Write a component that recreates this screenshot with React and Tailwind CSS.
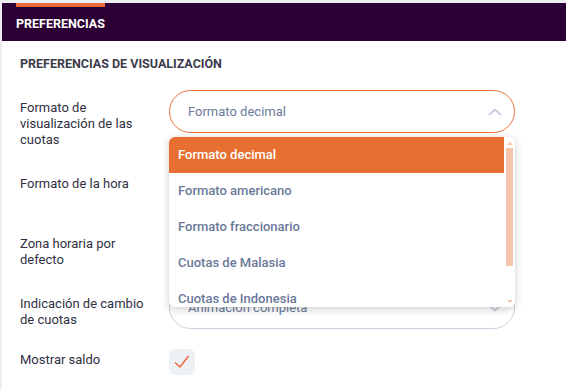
import React from 'react';

const options = [
    'Formato decimal',
    'Formato americano',
    'Formato fraccionario',
    'Cuotas de Malasia',
    'Cuotas de Indonesia',
    'Cuotas de Hong Kong',
];

function Chevron({ up }) {
    return (
        <svg width="14" height="8" viewBox="0 0 14 8" className="shrink-0">
            <polyline
                points={up ? '1,7 7,1.5 13,7' : '1,1 7,6.5 13,1'}
                fill="none"
                stroke="#c7cfdf"
                strokeWidth="2"
            />
        </svg>
    );
}

function Select({ value, active, up, children }) {
    return (
        <div className="relative w-[346px]">
            <div
                className={
                    'h-[43px] rounded-full border bg-white flex items-center justify-between pl-[18px] pr-[12px] ' +
                    (active ? 'border-[#e8733a]' : 'border-[#c9d0e0]')
                }
            >
                <span className="text-[13px] text-[#6c7b9b]">{value}</span>
                <Chevron up={up} />
            </div>
            {children}
        </div>
    );
}

function Dropdown() {
    return (
        <div className="absolute left-0 top-[47px] z-10 w-[346px] h-[170px] bg-white rounded-[6px] overflow-hidden shadow-[0_2px_8px_rgba(0,0,0,0.2)] flex">
            <div className="flex-1 flex flex-col overflow-hidden">
                {options.map((o, i) => (
                    <div
                        key={o}
                        className={
                            'h-[36px] shrink-0 flex items-center px-[9px] text-[13px] font-medium ' +
                            (i === 0 ? 'bg-[#e86f32] text-white' : 'text-[#6a7999]')
                        }
                    >
                        {o}
                    </div>
                ))}
            </div>
            <div className="w-[7px] mx-[2px] flex flex-col items-center pt-[5px] pb-[4px]">
                <div className="w-0 h-0 border-l-[3px] border-r-[3px] border-b-[3px] border-l-transparent border-r-transparent border-b-[#f5c4ab]" />
                <div className="w-[7px] h-[118px] mt-[3px] bg-[#f5c4ab]" />
                <div className="flex-1" />
                <div className="w-0 h-0 border-l-[3px] border-r-[3px] border-t-[3px] border-l-transparent border-r-transparent border-t-[#f5c4ab]" />
            </div>
        </div>
    );
}

function Row({ label, className, children }) {
    return (
        <div className={'flex items-start ' + className}>
            <div className="w-[149px] pt-[10px] pr-[20px] text-[13px] leading-[16px] text-[#30303f]">
                {label}
            </div>
            {children}
        </div>
    );
}

export default function App() {
    return (
        <div
            className="min-h-screen bg-[#eceef3] pt-[3px] pl-[2px]"
            style={{ fontFamily: 'Roboto, "Liberation Sans", sans-serif' }}
        >
            <div className="bg-white min-h-[386px]">
                <div className="h-[38px] bg-[#2c0035] px-[14px] flex">
                    <div className="flex flex-col">
                        <div className="h-[4px] bg-[#ea6a35]" />
                        <div className="flex-1 flex items-center text-[12.5px] font-bold text-white">
                            PREFERENCIAS
                        </div>
                    </div>
                </div>

                <div className="px-[18px] pt-[15px]">
                    <h2 className="text-[12.5px] leading-[16px] font-bold text-[#3b3b4a] mb-[18px]">
                        PREFERENCIAS DE VISUALIZACIÓN
                    </h2>

                    <Row label="Formato de visualización de las cuotas" className="mb-[18px]">
                        <Select value="Formato decimal" active up>
                            <Dropdown />
                        </Select>
                    </Row>

                    <Row label="Formato de la hora" className="mb-[17px]">
                        <Select value="24 horas" />
                    </Row>

                    <Row label="Zona horaria por defecto" className="mb-[17px]">
                        <Select value="(GMT+01:00) Madrid" />
                    </Row>

                    <Row label="Indicación de cambio de cuotas" className="mb-[20px]">
                        <Select value="Animación completa" />
                    </Row>

                    <div className="flex items-start">
                        <div className="w-[149px] pt-[3px] text-[13px] leading-[16px] text-[#30303f]">
                            Mostrar saldo
                        </div>
                        <div className="w-[26px] h-[26px] rounded-[6px] bg-[#edf0f4] flex items-center justify-center">
                            <svg width="26" height="26" viewBox="0 0 26 26">
                                <polyline
                                    points="6,13.5 11,18 19.5,7"
                                    fill="none"
                                    stroke="#ee6439"
                                    strokeWidth="1.4"
                                />
                            </svg>
                        </div>
                    </div>
                </div>
            </div>
        </div>
    );
}
